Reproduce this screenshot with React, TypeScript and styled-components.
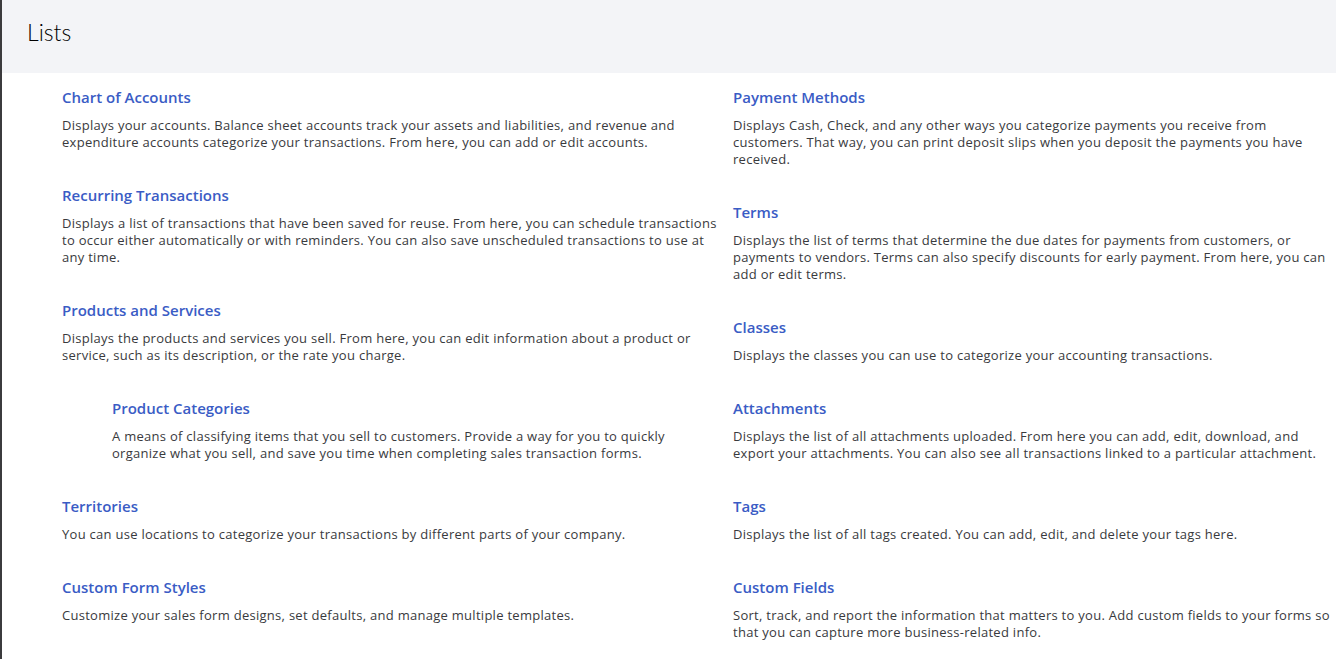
import * as React from 'react'
import styled, { createGlobalStyle } from 'styled-components'

interface ListEntry {
  title: string
  text: string
  nested?: boolean
}

const leftColumn: ListEntry[] = [
  {
    title: 'Chart of Accounts',
    text: 'Displays your accounts. Balance sheet accounts track your assets and liabilities, and revenue and expenditure accounts categorize your transactions. From here, you can add or edit accounts.'
  },
  {
    title: 'Recurring Transactions',
    text: 'Displays a list of transactions that have been saved for reuse. From here, you can schedule transactions to occur either automatically or with reminders. You can also save unscheduled transactions to use at any time.'
  },
  {
    title: 'Products and Services',
    text: 'Displays the products and services you sell. From here, you can edit information about a product or service, such as its description, or the rate you charge.'
  },
  {
    title: 'Product Categories',
    text: 'A means of classifying items that you sell to customers. Provide a way for you to quickly organize what you sell, and save you time when completing sales transaction forms.',
    nested: true
  },
  {
    title: 'Territories',
    text: 'You can use locations to categorize your transactions by different parts of your company.'
  },
  {
    title: 'Custom Form Styles',
    text: 'Customize your sales form designs, set defaults, and manage multiple templates.'
  }
]

const rightColumn: ListEntry[] = [
  {
    title: 'Payment Methods',
    text: 'Displays Cash, Check, and any other ways you categorize payments you receive from customers. That way, you can print deposit slips when you deposit the payments you have received.'
  },
  {
    title: 'Terms',
    text: 'Displays the list of terms that determine the due dates for payments from customers, or payments to vendors. Terms can also specify discounts for early payment. From here, you can add or edit terms.'
  },
  {
    title: 'Classes',
    text: 'Displays the classes you can use to categorize your accounting transactions.'
  },
  {
    title: 'Attachments',
    text: 'Displays the list of all attachments uploaded. From here you can add, edit, download, and export your attachments. You can also see all transactions linked to a particular attachment.'
  },
  {
    title: 'Tags',
    text: 'Displays the list of all tags created. You can add, edit, and delete your tags here.'
  },
  {
    title: 'Custom Fields',
    text: 'Sort, track, and report the information that matters to you. Add custom fields to your forms so that you can capture more business-related info.'
  }
]

export default function App() {
  return (
    <>
      <GlobalStyle />
      <Page>
        <Header>
          <PageTitle>Lists</PageTitle>
        </Header>
        <Columns>
          {[leftColumn, rightColumn].map((entries, i) => (
            <Column key={i}>
              {entries.map(entry => (
                <Item key={entry.title} nested={entry.nested}>
                  <ItemLink href="#">{entry.title}</ItemLink>
                  <Description>{entry.text}</Description>
                </Item>
              ))}
            </Column>
          ))}
        </Columns>
      </Page>
    </>
  )
}

const GlobalStyle = createGlobalStyle`
  body {
    margin: 0;
    background: #fff;
    font-family: "Open Sans", Lato, sans-serif;
    color: #393a3d;
  }
`

const Page = styled.div`
  min-height: 100vh;
  border-left: 2px solid #3b3b3d;
`

const Header = styled.header`
  height: 73px;
  background: #f3f4f7;
  padding: 18px 0 0 25px;
  box-sizing: border-box;
`

const PageTitle = styled.h1`
  margin: 0;
  font-family: Lato, sans-serif;
  font-size: 23px;
  line-height: 28px;
  font-weight: 300;
  color: #000;
`

const Columns = styled.div`
  display: grid;
  grid-template-columns: 660px 1fr;
  column-gap: 11px;
  padding: 14px 6px 0 60px;
`

const Column = styled.div`
  display: flex;
  flex-direction: column;
`

const Item = styled.div<{ nested?: boolean }>`
  margin: 0 0 34px ${({ nested }) => (nested ? '50px' : '0')};
`

const ItemLink = styled.a`
  display: block;
  font-size: 15px;
  line-height: 20px;
  font-weight: 600;
  color: #3a5cc5;
  text-decoration: none;
  &:hover {
    text-decoration: underline;
  }
`

const Description = styled.p`
  margin: 10px 0 0;
  font-size: 13px;
  line-height: 17px;
  letter-spacing: 0.28px;
  color: #393a3d;
`
